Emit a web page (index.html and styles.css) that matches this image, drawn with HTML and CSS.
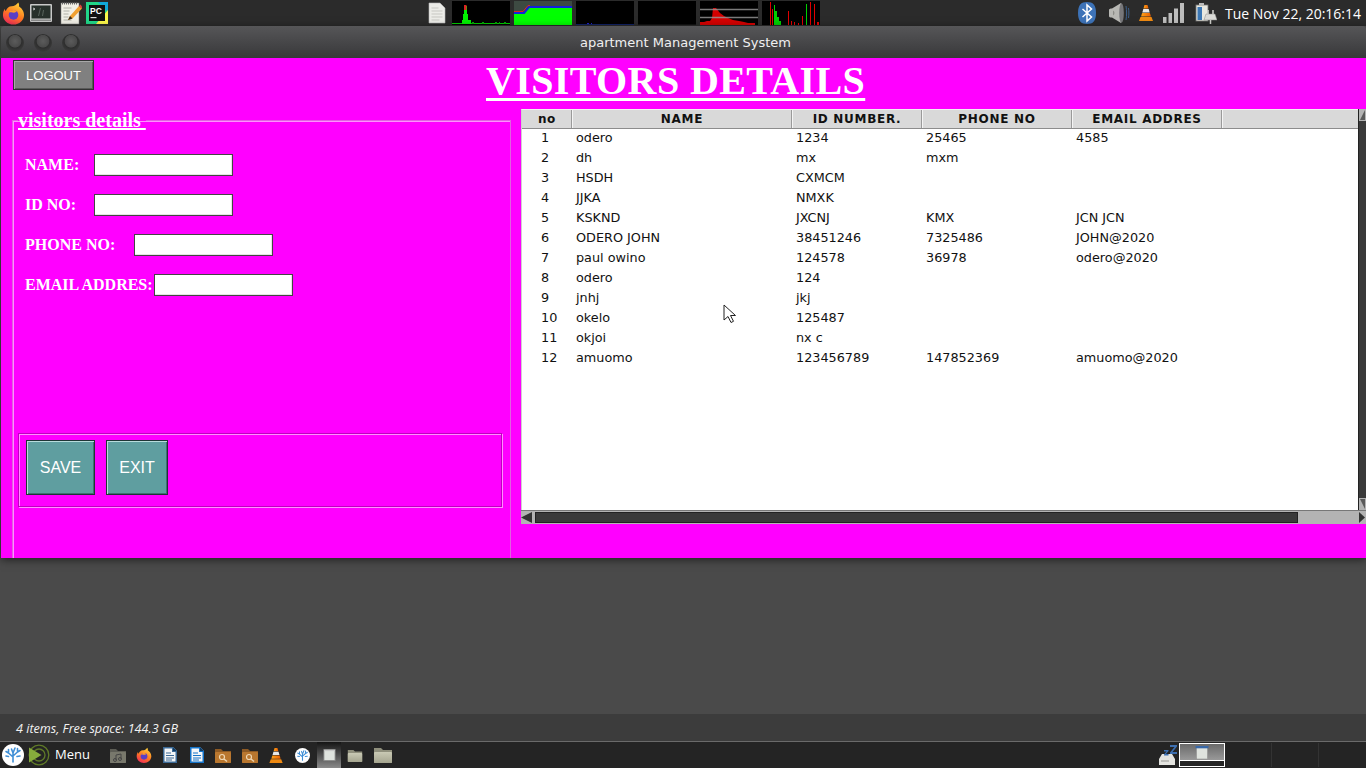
FILE: index.html
```html
<!DOCTYPE html>
<html lang="en">
<head>
<meta charset="utf-8">
<title>apartment Management System</title>
<link rel="stylesheet" href="styles.css">
</head>
<body>
<svg class="defs" width="0" height="0" aria-hidden="true">
  <defs>
    <linearGradient id="ffg" x1="0.7" y1="0" x2="0.2" y2="1"><stop offset="0" stop-color="#ffd23a"/><stop offset="0.5" stop-color="#ff7a1f"/><stop offset="1" stop-color="#f0265e"/></linearGradient>
    <linearGradient id="folderg" x1="0" y1="0" x2="0" y2="1"><stop offset="0" stop-color="#c9c9b4"/><stop offset="1" stop-color="#a5a58f"/></linearGradient>
    <linearGradient id="coneg" x1="0" y1="0" x2="1" y2="0"><stop offset="0" stop-color="#ffa31a"/><stop offset="1" stop-color="#e85d00"/></linearGradient>
    <symbol id="i-firefox" viewBox="0 0 24 24">
      <path d="M17 1c1 2 1 3 .6 4C20 6.500 23 10 23 14c0 5.500-4.800 10-11 10S1 19.500 1 14c0-3 1-5 2-6.500 0 1 .4 2 1 2.500C5 7 7.500 5 10 5c3 0 5-1.500 7-4z" fill="url(#ffg)"/>
      <circle cx="12" cy="14" r="5" fill="#5b3fc4"/>
      <path d="M7 11c2-2 6-3 8-1 1 1-2 2-4 1.500-2-.5-3 0-4-.5z" fill="#ff9a2a"/>
    </symbol>
    <symbol id="i-terminal" viewBox="0 0 22 18">
      <rect x="0" y="0" width="22" height="18" rx="1" fill="#c9c9c9"/>
      <rect x="1.500" y="1.500" width="19" height="13" fill="#27302b"/>
      <path d="M3 4l2 1-2 1" stroke="#e6e6e6" fill="none" stroke-width=".8"/>
      <path d="M8 12l2-8h1l-2 8zM12 12l1-6h1l-1 6z" fill="#59635d"/>
      <rect x="1" y="15.500" width="20" height="1.500" fill="#8a8a8a"/>
    </symbol>
    <symbol id="i-notepad" viewBox="0 0 22 24">
      <rect x="1" y="2" width="18" height="21" fill="#f1efe6" stroke="#777" stroke-width=".5"/>
      <path d="M2 2.500h16" stroke="#666" stroke-width="2" stroke-dasharray="1 1"/>
      <path d="M3.500 7h8M3.500 10h6M3.500 13h5M3.500 16h5M3.500 19h8" stroke="#b0b0a8"/>
      <path d="M8 19l2-4 9-10 3 2.500-9.500 10z" fill="#f0a030"/>
      <path d="M19 5l1.500-1.500 2 2.500-1 1.500z" fill="#e0443c"/>
      <path d="M8 19l2-4 2.500 2.500z" fill="#3a2a1a"/>
    </symbol>
    <symbol id="i-pycharm" viewBox="0 0 22 22">
      <rect width="22" height="22" fill="#21d789"/>
      <path d="M0 0h22v10L12 0z" fill="#11a8d8"/>
      <path d="M22 8v14H10z" fill="#fcf84a"/>
      <rect x="3" y="3" width="16" height="16" fill="#111"/>
      <text x="4" y="11.500" class="pc">PC</text>
      <rect x="4.500" y="15" width="6" height="1.200" fill="#ddd"/>
    </symbol>
    <symbol id="i-doc" viewBox="0 0 18 22">
      <path d="M1 1h11l5 5v15H1z" fill="#ecece8" stroke="#b8b8b8" stroke-width=".6"/>
      <path d="M3.500 6h7M3.500 9h11M3.500 12h11M3.500 15h11M3.500 18h8" stroke="#c7c7c2"/>
    </symbol>
    <symbol id="i-bluetooth" viewBox="0 0 18 22">
      <path d="M9 0c6 0 9 3 9 11s-3 11-9 11-9-3-9-11S3 0 9 0z" fill="#3d73b8"/>
      <path d="M4.500 7l9 8-4.500 4V3l4.500 4-9 8" fill="none" stroke="#fff" stroke-width="1.500"/>
    </symbol>
    <symbol id="i-speaker" viewBox="0 0 22 22">
      <path d="M1 8c0-1 1-1.500 3-1.500L13 1c2 3 2 17 0 20l-9-5.500c-2 0-3-.5-3-1.500z" fill="#b8b8b4"/>
      <ellipse cx="13.500" cy="11" rx="2.300" ry="9.800" fill="#77777a"/>
      <path d="M5 8.500c2 1 2 4 0 5z" fill="#8c8c88"/>
      <path d="M18 4c.8 5 .8 9 0 14M20.500 6c.5 4 .5 6 0 10" stroke="#3c5f8a" fill="none"/>
    </symbol>
    <symbol id="i-vlc" viewBox="0 0 14 18">
      <path d="M5.500 1h3l1 3.500h-5z" fill="url(#coneg)"/>
      <path d="M4.300 5h5.400l1 3.500H3.300z" fill="#e8e8e8"/>
      <path d="M3.100 9h7.800l1 3.500H2.100z" fill="url(#coneg)"/>
      <path d="M1.500 13h11l1.500 4H0z" fill="#ef8a12"/>
    </symbol>
    <symbol id="i-signal" viewBox="0 0 21 20">
      <path d="M0 14h3.500v6H0zM5.500 10H9v10H5.500zM11 5.500h4V20h-4zM17 0h4v20h-4z" fill="#bdbdbd"/>
    </symbol>
    <symbol id="i-battery" viewBox="0 0 22 22">
      <rect x="1" y="3" width="12" height="16" fill="#e8e8e0" stroke="#777" stroke-width=".8"/>
      <rect x="4" y="1" width="5" height="2" fill="#bbb"/>
      <rect x="2.500" y="5" width="4.500" height="13" fill="#3b77b5"/>
      <path d="M11 12h9l2 6H9z" fill="#dcdcd8" stroke="#8a8a8a" stroke-width=".5"/>
      <path d="M13 8v4M18 8v4M15.500 18v4" stroke="#cfcfcb" stroke-width="1.500"/>
    </symbol>
    <symbol id="i-mint" viewBox="0 0 22 22">
      <circle cx="11" cy="11" r="11" fill="#fff"/>
      <path d="M11 18V9M11 13L6.500 9V5.500M11 12l4.500-4V4.500M6.500 9L4 7.500M15.500 8L18 6.500M11 9L9.500 5M11 9l2-5M6.500 12.500L4 12M15 12.500l3-.5" stroke="#3f8fd6" stroke-width="1.600" fill="none" stroke-linecap="round"/>
    </symbol>
    <symbol id="i-menu" viewBox="0 0 22 22">
      <circle cx="11" cy="11" r="9.800" fill="none" stroke="#5f7a28" stroke-width="1.300"/>
      <circle cx="11" cy="11" r="6" fill="none" stroke="#5f7a28" stroke-width="1.300"/>
      <path d="M1 3.500L13.500 11 1 18.500z" fill="#86ab3c"/>
    </symbol>
    <symbol id="i-folder" viewBox="0 0 20 18">
      <path d="M1 2h7l2 2h9v13H1z" fill="#8f8f7c"/>
      <rect x="1" y="6" width="18" height="11" rx="1" fill="url(#folderg)"/>
    </symbol>
    <symbol id="i-folder-music" viewBox="0 0 16 15">
      <path d="M0 1h6l2 2h8v12H0z" fill="#5d5d55"/>
      <rect y="4" width="16" height="11" rx="1" fill="#78786c"/>
      <path d="M6 12V7l5-1v5" stroke="#444" fill="none"/>
      <circle cx="5" cy="12" r="1.500" fill="none" stroke="#444"/>
      <circle cx="10" cy="11" r="1.500" fill="none" stroke="#444"/>
    </symbol>
    <symbol id="i-folder-search" viewBox="0 0 16 15">
      <path d="M0 1h6l2 2h8v12H0z" fill="#8e5a24"/>
      <rect y="4" width="16" height="11" rx="1" fill="#b9772f"/>
      <circle cx="7" cy="9" r="2.500" fill="none" stroke="#f0d8b4" stroke-width="1.200"/>
      <path d="M9 11l3 2.500" stroke="#f0d8b4" stroke-width="1.500"/>
    </symbol>
    <symbol id="i-writer" viewBox="0 0 14 16">
      <path d="M0 0h10l4 4v12H0z" fill="#f4f6f8"/>
      <path d="M0 0h10l4 4v12H0zM1.500 1.500v13h11V5H9V1.500z" fill="currentColor" fill-rule="evenodd"/>
      <path d="M10 0l4 4h-4z" fill="#0f3d66"/>
      <path d="M3 6h5M3 8.500h8M3 11h8M3 13h6" stroke="currentColor"/>
    </symbol>
    <symbol id="i-window" viewBox="0 0 14 14">
      <rect x=".5" y=".5" width="13" height="13" fill="#dfe3de" stroke="#8a8a8a"/>
      <rect x="1" y="1" width="12" height="1.500" fill="#c8c8c8"/>
    </symbol>
    <symbol id="i-window-blue" viewBox="0 0 14 14">
      <rect x="1" y="1" width="12" height="13" fill="#dfe3de" stroke="#8a8a8a" stroke-width=".6"/>
      <rect x="0" y="0" width="14" height="2.500" fill="#3868a8"/>
    </symbol>
    <symbol id="i-sleep" viewBox="0 0 20 22">
      <path d="M2 15l3-5h10l3 5v6H2z" fill="#e4e4e0"/>
      <path d="M4 17h8" stroke="#bdbdb9" stroke-width="2"/>
      <path d="M13 1h7v1.500L15.500 8H20v2h-7V8.500L17.500 3H13zM7 6h4.500v1L9 10h2.500v1.500H7v-1L9.500 7.500H7z" fill="#3d6fb0"/>
    </symbol>
  </defs>
</svg>

<header class="top-panel">
  <div class="launchers">
    <svg class="ic ic-ff"><use href="#i-firefox"/></svg>
    <svg class="ic ic-term"><use href="#i-terminal"/></svg>
    <svg class="ic ic-note"><use href="#i-notepad"/></svg>
    <svg class="ic ic-pc"><use href="#i-pycharm"/></svg>
  </div>
  <div class="monitors">
    <svg class="ic ic-topdoc"><use href="#i-doc"/></svg>
    <svg class="mon" viewBox="0 0 58 24">
      <path d="M0 22.500h58" stroke="#0c0" stroke-width="1"/>
      <path d="M10 23v-4h1v-6h1V5h3v8h1v6h3v4z" fill="#0e0"/>
      <path d="M12 9V4h2.500v5z" fill="#d22"/>
      <path d="M20 21h2v2h-2zM30 21h2v2h-2zM43 21h2v2h-2zM47 21h1v2h-1zM52 21h2v2h-2z" fill="#0a0"/>
    </svg>
    <svg class="mon mon-net" viewBox="0 0 58 24">
      <path d="M0 13h10l5-6h43v17H0z" fill="#0f0"/>
      <path d="M0 12h10l5-6h43" stroke="#12d" stroke-width="2" fill="none"/>
      <path d="M0 10.500h9l5-6h2" stroke="#d22" stroke-width="1" fill="none"/>
    </svg>
    <svg class="mon" viewBox="0 0 58 24">
      <path d="M0 23.500h58" stroke="#126" stroke-width="1"/>
      <path d="M11 22h2v1h-2zM15 22h1v1h-1z" fill="#22c"/>
    </svg>
    <svg class="mon" viewBox="0 0 58 24"><path d="M0 23.500h58" stroke="#111"/></svg>
    <svg class="mon" viewBox="0 0 58 24">
      <path d="M0 24v-3h4l3-1h3l2-3 1-10h3l4 5 4 3 4 2 5 2 6 1 5 1 4 1h7v2z" fill="#d40000"/>
      <path d="M0 8.500h58M0 16.500h58" stroke="#9a9a9a" stroke-width="1.500" opacity=".8"/>
    </svg>
    <svg class="mon" viewBox="0 0 58 24">
      <path d="M8 24V1h1v23zM10 24V8h1v16zM26 24V10h1v14zM29 24v-4h1v4zM32 24v-3h1v3zM40 24v-9h1v9zM48 24V1h1v23zM52 24V3h1v21zM55 24v-3h2v3zM36 24v-2h1v2z" fill="#e00000"/>
      <path d="M12 24V4h1v20zM13 24V10h2v14zM15 24v-8h2v8zM17 24v-4h2v4zM44 24V3h1v21z" fill="#00d000"/>
    </svg>
  </div>
  <div class="tray">
    <svg class="ic ic-bt"><use href="#i-bluetooth"/></svg>
    <svg class="ic ic-spk"><use href="#i-speaker"/></svg>
    <svg class="ic ic-vlc"><use href="#i-vlc"/></svg>
    <svg class="ic ic-sig"><use href="#i-signal"/></svg>
    <svg class="ic ic-bat"><use href="#i-battery"/></svg>
    <span class="clock">Tue Nov 22, 20:16:14</span>
  </div>
</header>

<section class="window">
  <div class="titlebar">
    <div class="win-buttons"><span class="dot"></span><span class="dot"></span><span class="dot"></span></div>
    <div class="win-title">apartment Management System</div>
  </div>
  <main class="client">
    <div class="head-row">
      <button class="logout" type="button">LOGOUT</button>
      <h1 class="page-title">VISITORS DETAILS</h1>
    </div>
    <div class="body-row">
      <fieldset class="details">
        <legend class="details-legend">visitors details </legend>
        <div class="fields">
          <div class="field"><label class="lbl lbl-s">NAME:</label><input class="inp" type="text"></div>
          <div class="field"><label class="lbl lbl-s">ID NO:</label><input class="inp" type="text"></div>
          <div class="field"><label class="lbl lbl-m">PHONE NO:</label><input class="inp" type="text"></div>
          <div class="field"><label class="lbl lbl-l">EMAIL ADDRES:</label><input class="inp" type="text"></div>
        </div>
        <div class="actions">
          <button class="act act-save" type="button">SAVE</button>
          <button class="act act-exit" type="button">EXIT</button>
        </div>
      </fieldset>
      <div class="grid-wrap">
        <div class="grid-top">
          <div class="grid-view">
            <table class="grid">
              <colgroup><col class="c-no"><col class="c-name"><col class="c-id"><col class="c-ph"><col class="c-em"><col></colgroup>
              <thead><tr><th>no</th><th>NAME</th><th>ID NUMBER.</th><th>PHONE NO</th><th>EMAIL ADDRES</th><th></th></tr></thead>
              <tbody>
                <tr><td>1</td><td>odero</td><td>1234</td><td>25465</td><td>4585</td><td></td></tr>
                <tr><td>2</td><td>dh</td><td>mx</td><td>mxm</td><td></td><td></td></tr>
                <tr><td>3</td><td>HSDH</td><td>CXMCM</td><td></td><td></td><td></td></tr>
                <tr><td>4</td><td>JJKA</td><td>NMXK</td><td></td><td></td><td></td></tr>
                <tr><td>5</td><td>KSKND</td><td>JXCNJ</td><td>KMX</td><td>JCN JCN</td><td></td></tr>
                <tr><td>6</td><td>ODERO JOHN</td><td>38451246</td><td>7325486</td><td>JOHN@2020</td><td></td></tr>
                <tr><td>7</td><td>paul owino</td><td>124578</td><td>36978</td><td>odero@2020</td><td></td></tr>
                <tr><td>8</td><td>odero</td><td>124</td><td></td><td></td><td></td></tr>
                <tr><td>9</td><td>jnhj</td><td>jkj</td><td></td><td></td><td></td></tr>
                <tr><td>10</td><td>okelo</td><td>125487</td><td></td><td></td><td></td></tr>
                <tr><td>11</td><td>okjoi</td><td>nx c</td><td></td><td></td><td></td></tr>
                <tr><td>12</td><td>amuomo</td><td>123456789</td><td>147852369</td><td>amuomo@2020</td><td></td></tr>
              </tbody>
            </table>
          </div>
          <div class="vscroll">
            <svg class="v-arrow" viewBox="0 0 8 12"><rect width="8" height="12" fill="#b3b3b3"/><path d="M1 11L6 1v10z" fill="#5a5a5a"/></svg>
            <svg class="v-arrow v-down" viewBox="0 0 8 12"><rect width="8" height="12" fill="#b3b3b3"/><path d="M1 1l5 10V1z" fill="#5a5a5a"/></svg>
          </div>
        </div>
        <div class="hscroll">
          <svg class="h-arrow" viewBox="0 0 12 13"><path d="M0 6.500L11 1v11z" fill="#333"/></svg>
          <div class="h-thumb"></div>
          <svg class="h-arrow h-right" viewBox="0 0 8 13"><path d="M7 6.500L1 1v11z" fill="#333"/></svg>
        </div>
      </div>
    </div>
  </main>
</section>

<svg class="pointer" viewBox="0 0 13 19" aria-hidden="true"><path d="M1 1v15l4-3.500 3 6 2.500-1.200-3-5.800h5z" fill="#fff" stroke="#222" stroke-width="1"/></svg>

<div class="desktop"></div>
<div class="status">4 items, Free space: 144.3 GB</div>
<footer class="bottom-panel">
  <svg class="ic ic-mint"><use href="#i-mint"/></svg>
  <svg class="ic ic-menu"><use href="#i-menu"/></svg>
  <span class="menu-text">Menu</span>
  <div class="task-icons">
    <svg class="ic tm"><use href="#i-folder-music"/></svg>
    <svg class="ic tf"><use href="#i-firefox"/></svg>
    <svg class="ic t14 tdim"><use href="#i-writer"/></svg>
    <svg class="ic t14b tblue"><use href="#i-writer"/></svg>
    <svg class="ic t16"><use href="#i-folder-search"/></svg>
    <svg class="ic t16"><use href="#i-folder-search"/></svg>
    <svg class="ic t14v"><use href="#i-vlc"/></svg>
    <svg class="ic t14c"><use href="#i-mint"/></svg>
    <span class="task-active"><svg class="ic t-win"><use href="#i-window"/></svg></span>
    <svg class="ic t16f"><use href="#i-folder"/></svg>
    <svg class="ic t20f"><use href="#i-folder"/></svg>
  </div>
  <div class="task-right">
    <svg class="ic ic-sleep"><use href="#i-sleep"/></svg>
    <div class="pager-active">
      <div class="pager-top"><svg class="ic pager-win"><use href="#i-window-blue"/></svg></div>
      <div class="pager-bot"></div>
    </div>
    <div class="pager-cell"></div>
    <div class="pager-cell"></div>
  </div>
</footer>
</body>
</html>
```

FILE: styles.css
```css
* { box-sizing: border-box; }
html, body { margin: 0; padding: 0; }
body {
  width: 1366px;
  height: 768px;
  overflow: hidden;
  background: #4a4a4a;
  position: relative;
  font-family: "DejaVu Sans", sans-serif;
}
.defs { position: absolute; }
.ic { display: block; flex: none; }
.pc { font: bold 8.5px "Liberation Sans", sans-serif; fill: #fff; }

/* top panel */
.top-panel {
  height: 26px;
  background: #2b2b2b;
  display: flex;
  align-items: center;
}
.launchers { display: flex; align-items: center; width: 428px; padding-left: 2px; }
.ic-ff { width: 23px; height: 24px; }
.ic-term { width: 22px; height: 18px; margin-left: 5px; }
.ic-note { width: 22px; height: 24px; margin-left: 8px; }
.ic-pc { width: 22px; height: 22px; margin-left: 4px; }
.monitors { display: flex; align-items: center; width: 650px; }
.ic-topdoc { width: 18px; height: 22px; margin-right: 6px; }
.mon { width: 58px; height: 24px; background: #000; margin-right: 4px; flex: none; display: block; }
.mon-net { background: #3d4a42; }
.tray { display: flex; align-items: center; flex: 1; }
.ic-bt { width: 18px; height: 22px; }
.ic-spk { width: 22px; height: 22px; margin-left: 12px; }
.ic-vlc { width: 14px; height: 18px; margin-left: 9px; }
.ic-sig { width: 21px; height: 20px; margin-left: 10px; }
.ic-bat { width: 22px; height: 22px; margin-left: 11px; }
.clock { color: #fff; font: 14px "Open Sans", sans-serif; margin-left: 8px; white-space: nowrap; }

/* window */
.window {
  margin-left: 1px;
  height: 532px;
  box-shadow: 0 2px 8px rgba(0, 0, 0, .55);
  position: relative;
}
.titlebar {
  height: 32px;
  background: linear-gradient(#565658, #38383a);
  border-radius: 4px 4px 0 0;
  display: grid;
  grid-template-columns: 1fr auto 1fr;
  align-items: center;
}
.win-buttons { display: flex; gap: 10px; padding: 2px 0 0 5px; grid-column: 1; }
.dot {
  width: 18px;
  height: 18px;
  border-radius: 50%;
  background: radial-gradient(circle at 50% 40%, #5c5c5c 0, #4a4a4a 42%, #2e2e2e 48%, #484848 100%);
}
.win-title { grid-column: 2; color: #f0f0f0; font-size: 13px; padding-left: 4px; white-space: nowrap; }
.client { height: 500px; background: #ff00ff; overflow: hidden; }
.head-row { height: 50px; display: flex; align-items: flex-start; }
.logout {
  width: 81px;
  height: 30px;
  margin: 2px 0 0 12px;
  background: #808080;
  color: #fff;
  font: 13px "Liberation Sans", sans-serif;
  border: 1px solid #333;
  box-shadow: inset 1px 1px 0 #a8a8a8, inset -1px -1px 0 #5a5a5a;
  padding: 0;
}
.page-title {
  margin: 0 0 0 392px;
  color: #fff;
  font: bold 40px/46px "Liberation Serif", serif;
  letter-spacing: .38px;
  text-decoration: underline;
  text-decoration-thickness: 3px;
  text-underline-offset: 4px;
  white-space: nowrap;
}
.body-row { display: flex; align-items: flex-start; }

/* details */
.details {
  width: 499px;
  height: 470px;
  margin: 1px 0 0 11px;
  padding: 0 7px 0 6px;
  border: 1px solid #e060e0;
  box-shadow: inset 1px 1px 0 #ff90ff;
  min-width: 0;
}
.details-legend {
  margin-left: -1px;
  padding: 0;
  color: #fff;
  font: bold 20px/22px "Liberation Serif", serif;
  text-decoration: underline;
  text-decoration-thickness: 2px;
  white-space: pre;
}
.fields { display: flex; flex-direction: column; gap: 18px; padding: 23px 0 0 6px; }
.field { display: flex; align-items: center; height: 22px; }
.lbl { color: #fff; font: bold 16px "Liberation Serif", serif; white-space: nowrap; flex: none; }
.lbl-s { width: 69px; }
.lbl-m { width: 109px; }
.lbl-l { width: 129px; }
.inp {
  width: 139px;
  height: 22px;
  background: #fff;
  border: 1px solid #444;
  box-shadow: inset -1px -1px 0 #e4e4e4;
  padding: 0;
  border-radius: 0;
}
.actions {
  margin: 137px 0 0 -1px;
  width: 484px;
  height: 74px;
  border: 1px solid #c000c0;
  box-shadow: inset 1px 1px 0 #ff90ff, 1px 1px 0 #ff90ff;
  padding: 6px 6px 6px 7px;
  display: flex;
  gap: 11px;
  align-items: flex-start;
}
.act {
  height: 55px;
  background: #5f9ea0;
  color: #fff;
  font: 16px "Liberation Sans", sans-serif;
  border: 1px solid #1f3536;
  box-shadow: inset 1px 1px 0 #b8dcdc, inset -1px -1px 0 #3f6f70;
  padding: 0;
}
.act-save { width: 69px; }
.act-exit { width: 62px; }

/* grid */
.grid-wrap { width: 845px; margin: 1px 0 0 10px; }
.grid-top { display: flex; height: 401px; }
.grid-view { width: 837px; height: 401px; background: #fff; border-left: 1px solid #d0d0d0; border-top: 1px solid #f0f0f0; overflow: hidden; }
.grid { width: 836px; table-layout: fixed; border-collapse: collapse; }
.c-no { width: 50px; }
.c-name { width: 220px; }
.c-id { width: 130px; }
.c-ph { width: 150px; }
.c-em { width: 150px; }
.grid th {
  height: 18px;
  padding: 1px 0 0;
  background: #d9d9d9;
  border-right: 1px solid #f4f4f4;
  border-bottom: 1px solid #8c8c8c;
  box-shadow: inset -1px 0 0 #9a9a9a;
  font: bold 12px "DejaVu Sans", sans-serif;
  color: #111;
  letter-spacing: .7px;
}
.grid th:first-child { letter-spacing: .3px; }
.grid th:last-child { border-right: 0; box-shadow: none; }
.grid td {
  height: 20px;
  padding: 0 0 2px 4px;
  font: 12.8px "DejaVu Sans", sans-serif;
  color: #111;
  white-space: nowrap;
  overflow: hidden;
}
.grid td:first-child { padding-left: 19px; }
.vscroll {
  width: 8px;
  background: #3a3a3a;
  border-left: 1px solid #222;
  display: flex;
  flex-direction: column;
  justify-content: space-between;
}
.v-arrow { width: 8px; height: 12px; display: block; }
.hscroll {
  height: 14px;
  background: #b3b3b3;
  display: flex;
  align-items: stretch;
  border-top: 1px solid #777;
}
.h-arrow { width: 12px; height: 13px; display: block; flex: none; }
.h-thumb { width: 763px; margin: 1px 0 1px 2px; background: #3a3a3a; border: 1px solid #222; }
.h-right { width: 8px; margin-left: auto; }

/* pointer */
.pointer { position: absolute; left: 723px; top: 304px; width: 13px; height: 19px; }

/* bottom */
.desktop { height: 156px; }
.status {
  height: 27px;
  background: #3c3c3c;
  color: #f2f2f2;
  font: italic 12.6px/29px "Open Sans", sans-serif;
  padding-left: 16px;
}
.bottom-panel {
  height: 27px;
  background: #242424;
  border-top: 1px solid #6a6a6a;
  display: flex;
  align-items: center;
  padding-left: 2px;
}
.ic-mint { width: 22px; height: 22px; }
.ic-menu { width: 22px; height: 22px; margin-left: 4px; }
.menu-text { color: #fff; font: 13px/24px "Open Sans", sans-serif; margin: 0 0 2px 5px; width: 38px; }
.task-icons { display: flex; align-items: center; margin-left: 17px; }
.tm { width: 16px; height: 15px; margin-right: 10px; }
.tf { width: 16px; height: 16px; margin-right: 11px; }
.t16 { width: 16px; height: 15px; margin-right: 11px; }
.t14 { width: 14px; height: 16px; margin-right: 13px; }
.t14b { width: 14px; height: 16px; margin-right: 11px; }
.tdim { color: #3c6a96; }
.tblue { color: #1473c8; }
.t14v { width: 14px; height: 17px; margin-right: 12px; }
.t14c { width: 15px; height: 15px; margin-right: 7px; }
.task-active {
  width: 24px;
  height: 26px;
  background: linear-gradient(#141414, #8a8a8a);
  display: flex;
  align-items: center;
  justify-content: center;
  margin-right: 6px;
}
.t-win { width: 13px; height: 12px; }
.t16f { width: 16px; height: 15px; margin-right: 10px; }
.t20f { width: 20px; height: 18px; }
.task-right { display: flex; align-items: center; margin-left: auto; padding-right: 47px; height: 26px; }
.ic-sleep { width: 20px; height: 22px; margin-right: 2px; }
.pager-active { width: 46px; height: 24px; border: 1px solid #fff; display: flex; flex-direction: column; }
.pager-top {
  height: 17px;
  background: linear-gradient(#6a6a6a, #999);
  border-bottom: 1px solid #fff;
  display: flex;
  justify-content: center;
  align-items: center;
}
.pager-win { width: 14px; height: 13px; }
.pager-bot { flex: 1; background: #242424; }
.pager-cell { width: 47px; height: 24px; border-right: 1px solid #333; flex: none; }
```
